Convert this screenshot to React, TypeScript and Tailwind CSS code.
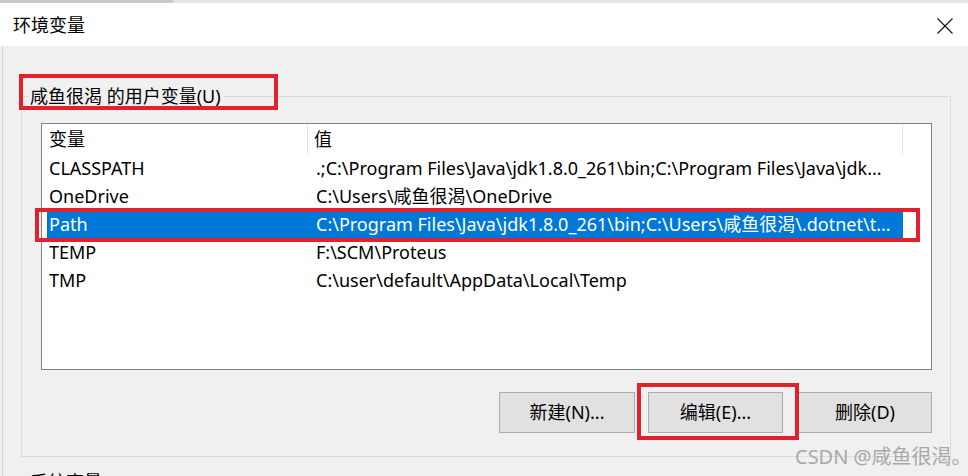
import React from "react";

const rows = [
  { name: "CLASSPATH", value: ".;C:\\Program Files\\Java\\jdk1.8.0_261\\bin;C:\\Program Files\\Java\\jdk..." },
  { name: "OneDrive", value: "C:\\Users\\咸鱼很渴\\OneDrive" },
  { name: "Path", value: "C:\\Program Files\\Java\\jdk1.8.0_261\\bin;C:\\Users\\咸鱼很渴\\.dotnet\\t...", selected: true },
  { name: "TEMP", value: "F:\\SCM\\Proteus" },
  { name: "TMP", value: "C:\\user\\default\\AppData\\Local\\Temp" },
];

export default function App() {
  return (
    <div
      className="relative w-[968px] h-[476px] overflow-hidden bg-[#f0f0f0] text-black text-[18px]"
      style={{ fontFamily: '"Noto Sans", "Noto Sans CJK SC", sans-serif' }}
    >
      {/* top strip */}
      <div className="flex h-[3px]">
        <div className="w-[173px] bg-[#c8c8c8]" />
        <div className="flex-1 bg-[#e4e4e4]" />
      </div>
      {/* title bar */}
      <div className="flex h-[43px] items-center justify-between bg-white pl-[13px] pr-[15px]">
        <span className="leading-none mt-[1px]">环境变量</span>
        <svg width="16" height="16" viewBox="0 0 16 16" className="mt-[2px]">
          <path d="M0.5 0.5 L15.5 15.5 M15.5 0.5 L0.5 15.5" stroke="#111" strokeWidth="1.1" fill="none" />
        </svg>
      </div>

      <div className="flex">
        <div className="w-px ml-[2px] bg-[#d6d6d6]" />
        <div className="flex-1">
          {/* group box */}
          <div className="relative ml-[18px] mt-[50px] w-[930px] h-[361px] border border-[#dcdcdc]">
            <div className="absolute left-[7px] top-[-14px] bg-[#f0f0f0] pl-px pr-[3px] leading-[26px]">
              咸鱼很渴 的用户变量(U)
            </div>
            <div className="absolute left-[-3px] top-[-23px] w-[259px] h-[36px] border-[4px] border-[#e3202d]" />

            {/* list view */}
            <div className="relative ml-[19px] mt-[26px] w-[891px] h-[247px] border border-[#828282] bg-white">
              <div className="flex h-[30px] items-center">
                <div className="w-[266px] h-full flex items-center pl-[7px] border-r border-[#e5e5e5]">变量</div>
                <div className="w-[595px] h-full flex items-center pl-[6px] border-r border-[#e5e5e5]">值</div>
              </div>
              {rows.map((r) => (
                <div key={r.name} className="flex h-[28px] items-stretch">
                  <div className={`flex w-[856px] ml-[5px] pl-[2px] items-center ${r.selected ? "bg-[#0078d7] text-white" : ""}`}>
                    <div className="w-[261px] shrink-0 whitespace-nowrap overflow-hidden">{r.name}</div>
                    <div className="w-[593px] shrink-0 whitespace-nowrap overflow-hidden pl-[6px]">{r.value}</div>
                  </div>
                </div>
              ))}
              <div className="absolute left-[-7px] top-[84px] w-[885px] h-[34px] border-[4px] border-[#e3202d]" />
            </div>

            {/* buttons */}
            <div className="mt-[22px] flex justify-end pr-[18px]">
              <button className="w-[136px] h-[41px] bg-[#e1e1e1] border border-[#adadad]">新建(N)...</button>
              <div className="relative ml-[13px]">
                <button className="w-[135px] h-[41px] bg-[#e1e1e1] border border-[#adadad]">编辑(E)...</button>
                <div className="absolute left-[-11px] top-[-9px] w-[162px] h-[57px] border-[4px] border-[#e3202d]" />
              </div>
              <button className="ml-[15px] w-[134px] h-[41px] bg-[#e1e1e1] border border-[#adadad]">删除(D)</button>
            </div>
          </div>
          <div className="ml-[27px] mt-[12px] leading-[26px]">系统变量(S)</div>
        </div>
      </div>

      {/* watermark */}
      <div className="absolute left-[795px] top-[444px] text-[20px] leading-[26px] text-[#a8a8a8] whitespace-nowrap">
        CSDN @咸鱼很渴。
      </div>
    </div>
  );
}
